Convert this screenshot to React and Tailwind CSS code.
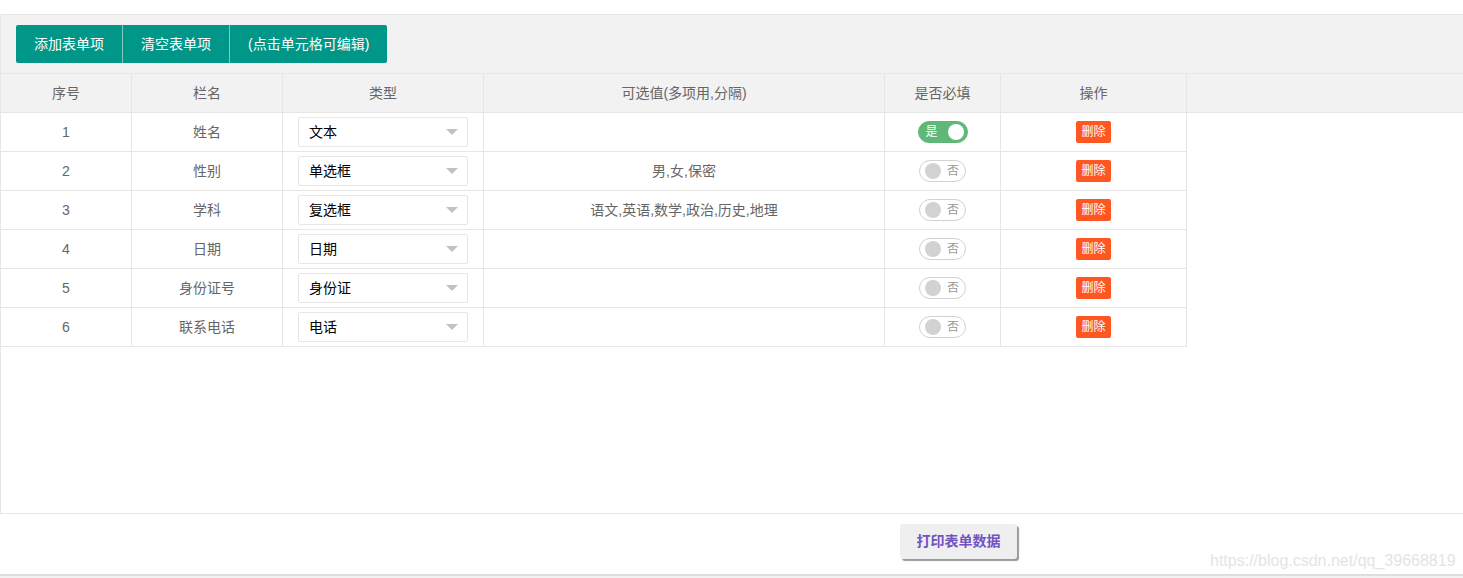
import React, { useState } from 'react';

const COLS = [131, 151, 201, 401, 116, 186];
const HEADS = ['序号', '栏名', '类型', '可选值(多项用,分隔)', '是否必填', '操作'];

const ROWS = [
  { id: 1, name: '姓名', type: '文本', opts: '', required: true },
  { id: 2, name: '性别', type: '单选框', opts: '男,女,保密', required: false },
  { id: 3, name: '学科', type: '复选框', opts: '语文,英语,数学,政治,历史,地理', required: false },
  { id: 4, name: '日期', type: '日期', opts: '', required: false },
  { id: 5, name: '身份证号', type: '身份证', opts: '', required: false },
  { id: 6, name: '联系电话', type: '电话', opts: '', required: false },
];

function Switch({ on }) {
  return on ? (
    <div className="flex items-center h-[22px] w-[50px] rounded-full bg-[#5FB878] border border-[#5FB878] pl-[7px] pr-[3px] justify-between">
      <span className="text-[12px] text-white leading-none">是</span>
      <span className="w-[16px] h-[16px] rounded-full bg-white" />
    </div>
  ) : (
    <div className="flex items-center h-[22px] w-[47px] rounded-full bg-white border border-[#d2d2d2] pl-[5px] pr-[6px] justify-between">
      <span className="w-[16px] h-[16px] rounded-full bg-[#d2d2d2]" />
      <span className="text-[12px] text-[#999] leading-none">否</span>
    </div>
  );
}

function Select({ value }) {
  return (
    <div className="ml-[15px] w-[170px] h-[30px] border border-[#e6e6e6] rounded-[2px] bg-white flex items-center justify-between pl-[10px] pr-[9px]">
      <span className="text-[14px] text-black">{value}</span>
      <span className="w-0 h-0 border-l-[6px] border-r-[6px] border-t-[6px] border-l-transparent border-r-transparent border-t-[#c2c2c2]" />
    </div>
  );
}

export default function App() {
  const [rows] = useState(ROWS);

  return (
    <div
      className="relative w-[1463px] h-[578px] bg-white overflow-hidden text-[#666]"
      style={{ fontFamily: '"Liberation Sans", "Noto Sans CJK SC", sans-serif' }}
    >
      <div className="h-[14px]" />

      {/* form table panel */}
      <div className="border-t border-l border-b border-[#e6e6e6] w-[1500px]">
        <div className="bg-[#f2f2f2] border-b border-[#e6e6e6] pt-[10px] pb-[10px] pl-[15px]">
          <div className="flex">
            {['添加表单项', '清空表单项', '(点击单元格可编辑)'].map((t, i) => (
              <button
                key={t}
                className={`h-[38px] px-[18px] bg-[#009688] text-white text-[14px] ${i === 0 ? 'rounded-l-[2px]' : 'border-l border-[rgba(255,255,255,0.5)]'} ${i === 2 ? 'rounded-r-[2px]' : ''}`}
              >
                {t}
              </button>
            ))}
          </div>
        </div>

        <div className="h-[439px]">
          {/* header */}
          <div className="flex bg-[#f2f2f2] border-b border-[#e6e6e6]">
            {HEADS.map((h, i) => (
              <div
                key={h}
                className="h-[38px] flex items-center justify-center border-r border-[#e6e6e6] text-[14px] text-[#666] box-content"
                style={{ width: COLS[i] - 1 }}
              >
                {h}
              </div>
            ))}
          </div>

          {/* body */}
          {rows.map((r) => (
            <div key={r.id} className="flex">
              {[
                <span key="a">{r.id}</span>,
                <span key="b">{r.name}</span>,
                <Select key="c" value={r.type} />,
                <span key="d">{r.opts}</span>,
                <Switch key="e" on={r.required} />,
                <button key="f" className="h-[22px] px-[5px] bg-[#FF5722] text-white text-[12px] rounded-[2px]">删除</button>,
              ].map((c, i) => (
                <div
                  key={i}
                  className={`h-[38px] flex items-center border-r border-b border-[#e6e6e6] text-[14px] box-content ${i === 2 ? 'justify-start' : 'justify-center'}`}
                  style={{ width: COLS[i] - 1 }}
                >
                  {c}
                </div>
              ))}
            </div>
          ))}
        </div>
      </div>

      {/* footer */}
      <div className="h-[60px] pt-[10px] pl-[900px]">
        <button className="h-[35px] w-[117px] bg-[#efefef] rounded-[3px] text-[14px] font-bold text-[#7352c4] shadow-[2px_2px_1px_#9a9a9a]">
          打印表单数据
        </button>
      </div>
      <div className="border-t-2 border-[#dedede] bg-[#f2f2f2] h-[10px]" />

      <span className="absolute left-[1210px] top-[549px] text-[16px] text-[#e4e4e4]" style={{ fontFamily: '"Liberation Sans", Arial, sans-serif' }}>
        https://blog.csdn.net/qq_39668819
      </span>
    </div>
  );
}
